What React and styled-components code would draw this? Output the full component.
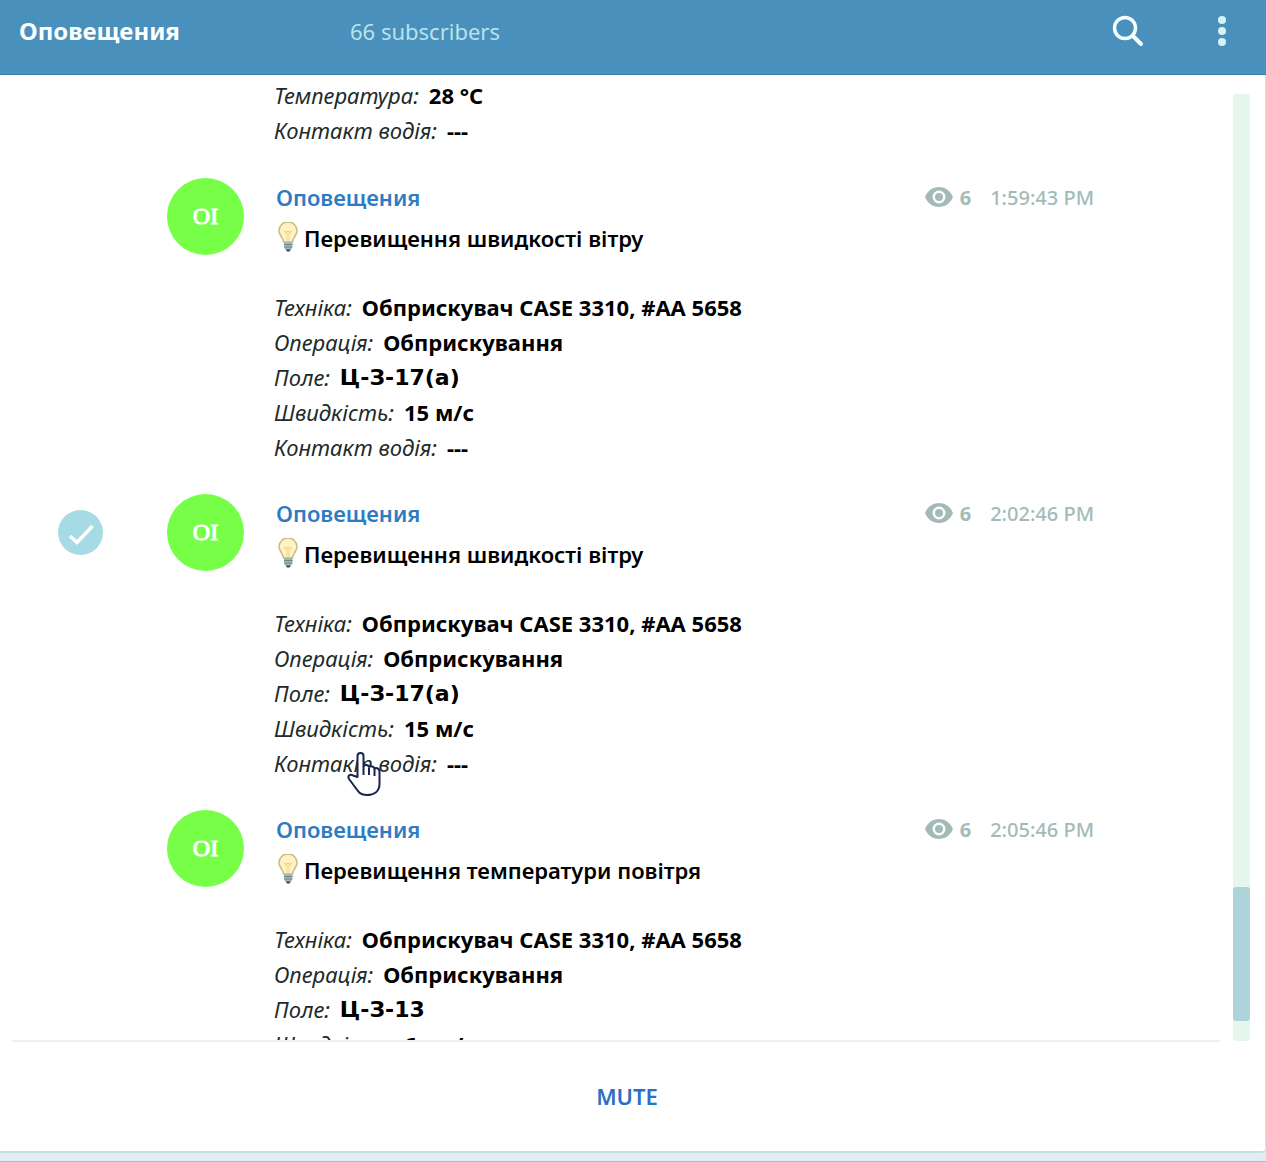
import styled, { createGlobalStyle } from "styled-components";

const BLUE = "#4990bc";
const FONT = `"Noto Sans", "Open Sans", sans-serif`;

const MESSAGES = [
    {
        time: "1:59:43 PM",
        title: "Перевищення швидкості вітру",
        rows: [
            ["Техніка:", "Обприскувач CASE 3310, #AA 5658"],
            ["Операція:", "Обприскування"],
            ["Поле:", "Ц-З-17(а)", true],
            ["Швидкість:", "15 м/с"],
            ["Контакт водія:", "---"],
        ],
    },
    {
        time: "2:02:46 PM",
        title: "Перевищення швидкості вітру",
        selected: true,
        rows: [
            ["Техніка:", "Обприскувач CASE 3310, #AA 5658"],
            ["Операція:", "Обприскування"],
            ["Поле:", "Ц-З-17(а)", true],
            ["Швидкість:", "15 м/с"],
            ["Контакт водія:", "---"],
        ],
    },
    {
        time: "2:05:46 PM",
        title: "Перевищення температури повітря",
        rows: [
            ["Техніка:", "Обприскувач CASE 3310, #AA 5658"],
            ["Операція:", "Обприскування"],
            ["Поле:", "Ц-З-13", true],
            ["Швидкість:", "6 км/г"],
        ],
    },
];

const GlobalStyle = createGlobalStyle`
    * {
        box-sizing: border-box;
    }

    body {
        margin: 0;
        background: #e0eef3;
        font-family: ${FONT};
    }
`;

const Page = styled.div`
    display: flex;
    flex-direction: column;
    height: 100vh;
    padding-bottom: 8px;
    border-bottom: 1px solid #a4bcc4;
`;

const Header = styled.header`
    display: flex;
    align-items: center;
    flex: none;
    height: 75px;
    padding: 0 28px 12px 19px;
    background: ${BLUE};
    border-bottom: 1px solid #3a80ad;
`;

const Title = styled.h1`
    flex: none;
    width: 331px;
    margin: 0;
    font-size: 24px;
    line-height: 30px;
    color: #fff;
`;

const Subscribers = styled.span`
    flex: 1;
    font-size: 22px;
    line-height: 30px;
    color: #b9e2ec;
`;

const IconButton = styled.button`
    display: flex;
    padding: 0;
    border: 0;
    background: none;
    margin-left: ${({ $gap }) => $gap || 0}px;
`;

const Panel = styled.main`
    display: flex;
    flex-direction: column;
    flex: 1;
    min-height: 0;
    background: #fff;
    border-right: 1px solid #cfe5ea;
    border-bottom: 2px solid #c5dfe4;
    border-radius: 0 0 4px 0;
`;

const Content = styled.div`
    display: flex;
    flex: 1;
    min-height: 0;
    padding: 0 15px 0 12px;
    gap: 13px;
`;

const List = styled.div`
    flex: 1;
    overflow: hidden;
    padding: 3px 126px 0 46px;
    border-bottom: 2px solid #e9f0f0;
`;

const Track = styled.div`
    display: flex;
    flex-direction: column;
    justify-content: flex-end;
    width: 17px;
    margin: 19px 0 1px;
    padding-bottom: 20px;
    background: #e7f5ef;
    border-radius: 3px;
`;

const Thumb = styled.div`
    height: 134px;
    background: #add4d9;
    border-radius: 3px;
`;

const Message = styled.article`
    display: grid;
    grid-template-columns: 45px 77px 1fr;
    column-gap: 64px;
    height: ${({ $partial }) => ($partial ? "100px" : "316px")};
`;

const Check = styled.span`
    width: 45px;
    height: 45px;
    margin-top: 16px;
`;

const Avatar = styled.div`
    display: flex;
    align-items: center;
    justify-content: center;
    width: 77px;
    height: 77px;
    border-radius: 50%;
    background: #77ff48;
    color: #fff;
    font-family: "Liberation Serif", serif;
    font-size: 24px;
    -webkit-text-stroke: 1px #fff;
`;

const Body = styled.div`
    margin-left: -34px;
`;

const TopLine = styled.div`
    display: flex;
    align-items: center;
    justify-content: space-between;
    height: 38px;
    padding-left: 2px;
`;

const Author = styled.a`
    color: #2e7bc4;
    font-size: 22px;
    font-weight: 600;
    text-decoration: none;
`;

const Meta = styled.div`
    display: flex;
    align-items: center;
    color: #a3bbb8;
    font-size: 20px;
    font-weight: 500;
`;

const Views = styled.b`
    margin: 0 19px 0 7px;
`;

const Alert = styled.h2`
    display: flex;
    align-items: center;
    gap: 3px;
    height: 44px;
    margin: 0 0 30px;
    padding-left: 2px;
    font-size: 22px;
    font-weight: 600;
    color: #000;
`;

const Row = styled.p`
    display: flex;
    gap: 10px;
    margin: 0;
    font-size: 22px;
    line-height: 35px;
    color: #000;
    white-space: nowrap;
`;

const Label = styled.em`
    color: #1d2b2b;
`;

const Value = styled.b`
    font-family: ${({ $wide }) => ($wide ? `"DejaVu Sans", sans-serif` : "inherit")};
`;

const Footer = styled.footer`
    display: flex;
    align-items: center;
    justify-content: center;
    flex: none;
    height: 109px;
    padding: 0 11px 2px 0;
`;

const MuteButton = styled.button`
    padding: 8px 12px;
    border: 0;
    background: none;
    color: #2b6fc6;
    font-family: ${FONT};
    font-size: 22px;
    font-weight: 600;
`;

const Pointer = styled.svg`
    position: absolute;
    left: 346px;
    top: 750px;
`;

function Bulb() {
    return (
        <svg width="25" height="32" viewBox="0 0 25 32" aria-hidden="true">
            <path d="M7.500 20C7.500 16 3 13.500 3 8.500a9 8.500 0 0 1 18 0c0 5-4.500 7.500-4.500 11.500z" fill="#fff3c4" stroke="#cbb97f" strokeWidth="1.500" />
            <path d="M11 19v-7l-2.500-3 2.500 1 1-1 1 1 2.500-1-2.500 3v7" fill="none" stroke="#f3d987" strokeWidth="1.200" />
            <path d="M8 20h8.500v5.500l-2 3h-4.500l-2-3z" fill="#a5b6bb" />
            <path d="M8 22.500h8.500M8.500 25h7.500" stroke="#6f858a" strokeWidth="1" />
            <path d="M10 27.500h4.500l-1 2h-2.500z" fill="#33464b" />
        </svg>
    );
}

function Eye() {
    return (
        <svg width="28" height="20" viewBox="0 0 28 20" aria-hidden="true">
            <path
                fill="currentColor"
                fillRule="evenodd"
                d="M14 0C7.600 0 2.200 4.100 0 10c2.200 5.900 7.600 10 14 10s11.800-4.100 14-10C25.800 4.100 20.400 0 14 0zm0 16.500a6.500 6.500 0 1 1 0-13 6.500 6.500 0 0 1 0 13zM14 6a4 4 0 1 0 0 8 4 4 0 0 0 0-8z"
            />
        </svg>
    );
}

function MessageRow({ label, value, wide }) {
    return (
        <Row>
            <Label>{label}</Label>
            <Value $wide={wide}>{value}</Value>
        </Row>
    );
}

function App() {
    return (
        <Page>
            <GlobalStyle />
            <Header>
                <Title>Оповещения</Title>
                <Subscribers>66 subscribers</Subscribers>
                <IconButton aria-label="Search">
                    <svg width="32" height="32" viewBox="0 0 32 32" fill="none" stroke="#f4ffff" strokeLinecap="round">
                        <circle cx="13" cy="13" r="10.500" strokeWidth="3.500" />
                        <path d="M21 21l8 8" strokeWidth="4" />
                    </svg>
                </IconButton>
                <IconButton aria-label="Menu" $gap={62}>
                    <svg width="32" height="32" viewBox="0 0 32 32" fill="#d5f3f5">
                        <circle cx="16" cy="5" r="4" />
                        <circle cx="16" cy="16" r="4" />
                        <circle cx="16" cy="27" r="4" />
                    </svg>
                </IconButton>
            </Header>
            <Panel>
                <Content>
                    <List>
                        <Message $partial>
                            <span />
                            <span />
                            <Body>
                                <MessageRow label="Температура:" value="28 °C" />
                                <MessageRow label="Контакт водія:" value="---" />
                            </Body>
                        </Message>
                        {MESSAGES.map((message) => (
                            <Message key={message.time}>
                                <Check>
                                    {message.selected && (
                                        <svg width="45" height="45" viewBox="0 0 45 45" aria-label="Selected">
                                            <circle cx="22.500" cy="22.500" r="22.500" fill="#a6dbe5" />
                                            <path d="M12 26l7 6.500L34.500 16" fill="none" stroke="#fff" strokeWidth="3.500" />
                                        </svg>
                                    )}
                                </Check>
                                <Avatar>OI</Avatar>
                                <Body>
                                    <TopLine>
                                        <Author href="#channel">Оповещения</Author>
                                        <Meta>
                                            <Eye />
                                            <Views>6</Views>
                                            <time>{message.time}</time>
                                        </Meta>
                                    </TopLine>
                                    <Alert>
                                        <Bulb />
                                        {message.title}
                                    </Alert>
                                    {message.rows.map(([label, value, wide]) => (
                                        <MessageRow key={label} label={label} value={value} wide={wide} />
                                    ))}
                                </Body>
                            </Message>
                        ))}
                    </List>
                    <Track>
                        <Thumb />
                    </Track>
                </Content>
                <Footer>
                    <MuteButton>MUTE</MuteButton>
                </Footer>
            </Panel>
            <Pointer width="38" height="48" viewBox="0 0 38 48" aria-hidden="true">
                <path
                    d="M11.500 27V6c0-4 6-4 6 0v10c2-2 5-1 5.500 1 2-1.500 5-.5 5.500 1.500 2-1 5 0 5 3V34c0 7-5 11-13 11-6 0-8-3-10-6L3 29c-2-4 2-5 4-3.500z"
                    fill="#fff"
                    stroke="#18244f"
                    strokeWidth="2"
                    strokeLinejoin="round"
                />
                <path d="M17.500 16v9M23 18v7M28.500 19v7" stroke="#18244f" strokeWidth="2" />
            </Pointer>
        </Page>
    );
}

export default App;
